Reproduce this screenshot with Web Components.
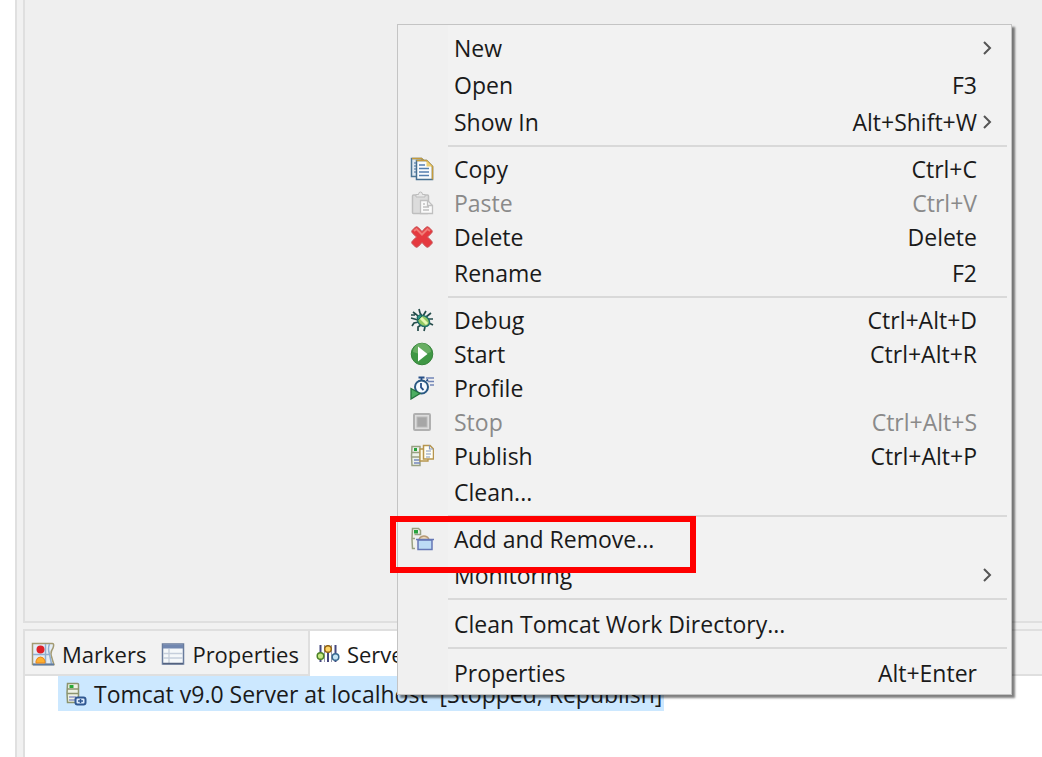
<!DOCTYPE html>
<html lang="en">
<head>
<meta charset="UTF-8">
<meta name="viewport" content="width=device-width, initial-scale=1.0">
<title>Servers</title>
<style>
  body {
    margin: 0;
    background: #fff;
    color: #1a1a1a;
    font: 23px/34px "Open Sans", "Noto Sans", "Noto Sans CJK KR", sans-serif;
    overflow: hidden;
  }
</style>
</head>
<body>
<work-bench>
  <view-stack slot="views">
    <view-tab slot="tabs" icon="markers">Markers</view-tab>
    <view-tab slot="tabs" icon="properties">Properties</view-tab>
    <view-tab slot="tabs" icon="servers" active>Servers</view-tab>
    <server-row>Tomcat v9.0 Server at localhost  [Stopped, Republish]</server-row>
  </view-stack>
</work-bench>

<context-menu>
  <menu-item submenu>New</menu-item>
  <menu-item keys="F3">Open</menu-item>
  <menu-item keys="Alt+Shift+W" submenu>Show In</menu-item>
  <menu-line></menu-line>
  <menu-item icon="copy" keys="Ctrl+C">Copy</menu-item>
  <menu-item icon="paste" keys="Ctrl+V" disabled>Paste</menu-item>
  <menu-item icon="delete" keys="Delete">Delete</menu-item>
  <menu-item keys="F2">Rename</menu-item>
  <menu-line></menu-line>
  <menu-item icon="debug" keys="Ctrl+Alt+D">Debug</menu-item>
  <menu-item icon="start" keys="Ctrl+Alt+R">Start</menu-item>
  <menu-item icon="profile">Profile</menu-item>
  <menu-item icon="stop" keys="Ctrl+Alt+S" disabled>Stop</menu-item>
  <menu-item icon="publish" keys="Ctrl+Alt+P">Publish</menu-item>
  <menu-item>Clean...</menu-item>
  <menu-line></menu-line>
  <menu-item icon="addremove" marked>Add and Remove...</menu-item>
  <menu-item submenu>Monitoring</menu-item>
  <menu-line></menu-line>
  <menu-item>Clean Tomcat Work Directory...</menu-item>
  <menu-line></menu-line>
  <menu-item keys="Alt+Enter">Properties</menu-item>
</context-menu>

<script>
const icons = {
  markers: `
    <path d="M1.500 1.500h20q2 0 .500 4.500q-3 4.500-1.500 8.500q1 4 2.500 8h-21.500z" fill="#e4edf6" stroke="#a39a72" stroke-width="1.500"/>
    <path d="M14.500 2v20M18.500 2q-2 5 0 10q1 5 2 10M2 12.500h17" fill="none" stroke="#91afd0" stroke-width="1.500"/>
    <path d="M2 22.500h21" stroke="#607b9f" stroke-width="2"/>
    <circle cx="9.500" cy="7.500" r="4" fill="#df2028"/>
    <path d="M5 21v-2q1-4 4.500-4t4.500 4v2z" fill="#ffb02e" stroke="#e7871e"/>`,
  properties: `
    <rect x="1.500" y="2" width="21" height="20" fill="#f5f8fa" stroke="#687b9c" stroke-width="1.500"/>
    <path d="M2 2.500h20v4h-20z" fill="#7187b0"/>
    <path d="M8 7v14M2 11.500h20M2 16h20" stroke="#c5cedb" stroke-width="1.300"/>
    <path d="M2 21.500h20" stroke="#53627f" stroke-width="1.500"/>`,
  servers: `
    <path d="M4.500 3v17M12 3v17M19.500 3v17" stroke="#45487e" stroke-width="2"/>
    <path d="M8.500 3v17M15.500 3v17" stroke="#9698ad" stroke-width="1"/>
    <circle cx="4.500" cy="14" r="3.300" fill="#c6e883" stroke="#4c8126" stroke-width="1.500"/>
    <circle cx="12" cy="7" r="3.300" fill="#ffd568" stroke="#936414" stroke-width="1.500"/>
    <circle cx="19.500" cy="15" r="3.300" fill="#c5e5f4" stroke="#37688f" stroke-width="1.500"/>`,
  copy: `
    <path d="M1.500 1.500h10l3 3v15h-13z" fill="#e0eaf2" stroke="#4e7796" stroke-width="1.500"/>
    <path d="M2 1.500h9.500l3 3" fill="none" stroke="#c69b3b" stroke-width="1.500"/>
    <path d="M4 6h3M4 9h3M4 12h3M4 15h3" stroke="#7797b9" stroke-width="1.500"/>
    <path d="M6.500 3.500h10l6 6v13h-16z" fill="#f8fbfd" stroke="#456f91" stroke-width="1.500"/>
    <path d="M6.500 3.500h10l6 6v13" fill="none" stroke="#c69b3b" stroke-width="1.500"/>
    <path d="M16.500 3.500v6h6z" fill="#edcf72"/>
    <path d="M9 8h6M9 11.500h10M9 15h10M9 18.500h10" stroke="#547fae" stroke-width="1.500"/>`,
  paste: `
    <rect x="2.500" y="4" width="16" height="18.500" rx="1" fill="#dcdcdc" stroke="#bebebe" stroke-width="1.500"/>
    <path d="M6 6V3.500h2.500q0-2.500 2-2.500t2 2.500H15V6z" fill="#e8e8e8" stroke="#bdbdbd"/>
    <path d="M10.500 9.500h7l5 5v8h-12z" fill="#fafafa" stroke="#c0c0c0" stroke-width="1.300"/>
    <path d="M17.500 9.500v5h5M13 13h2M13 16h6M13 19h6" fill="none" stroke="#c0c0c0" stroke-width="1.300"/>`,
  delete: `
    <path d="M2 5.500 5.500 2q1.500-.800 3 .700l3.500 3.800 3.500-3.800q1.500-1.500 3-.700L22 5.500q.700 1.200-.300 2.500L17.500 12l4.200 4q1 1.300.300 2.500L18.500 22q-1.500.800-3-.700L12 17.500l-3.500 3.800q-1.500 1.500-3 .700L2 18.500q-.700-1.200.300-2.500l4.200-4-4.200-4q-1-1.300-.300-2.500z" fill="#e5393f" stroke="#c9565a"/>
    <path d="m4 6 2.500-2 5.500 5.500L17.500 4 20 6" fill="none" stroke="#f17c76" stroke-width="2"/>`,
  debug: `
    <path d="m1 10 7 2M3 4l4 3 2 3M9 1l1 4 2 3M16 3l-3 5M21 5l-5 4M18 11h5M19 15l4 2M9 14l-5 1-2 3M11 17l-3 2v4M15 19l-1 4M5 7H1" fill="none" stroke="#244c4b" stroke-width="1.700"/>
    <ellipse cx="13.500" cy="13" rx="6.500" ry="5" transform="rotate(35 13.500 13)" fill="#92c964" stroke="#21716a" stroke-width="1.500"/>
    <path d="m11 10 6 6" stroke="#e7f7b2" stroke-width="3"/>
    <path d="M7 9q3-4 5-1l-4 4z" fill="#2c9684" stroke="#1e645f"/>`,
  start: `
    <circle cx="12" cy="12" r="10.800" fill="#3f9744" stroke="#36843b"/>
    <path d="M3 10a9 9 0 0 1 18 0q-8 4-18 0z" fill="#8bc17d" opacity=".55"/>
    <path d="m8 4.500 9.500 7.500L8 19.500z" fill="#fff"/>`,
  profile: `
    <circle cx="11.500" cy="11" r="6.500" fill="#f5faff" stroke="#295883" stroke-width="2"/>
    <path d="M11.500 4V1.500M8.500 1.500h6M16.500 5l1.500-1.500M11 7v4.500l2.500 2.500" fill="none" stroke="#274f87" stroke-width="1.800"/>
    <path d="M16 2h8M18 5.500h6M20 9h4" stroke="#7185b6" stroke-width="1.500"/>
    <path d="m1 12.500 9 5-9 5.500z" fill="#4cae61" stroke="#24723d" stroke-width="1.300"/>`,
  stop: `
    <rect x="4" y="4" width="16" height="16" rx="1" fill="#dcdcdc" stroke="#b0b0b0" stroke-width="2"/>
    <rect x="7" y="7" width="10" height="10" fill="#a6a6a6" stroke="#b9b9b9"/>`,
  publish: `
    <path d="M2 2.500h8v19H2q-1-9 0-19z" fill="#edf2eb" stroke="#99a083" stroke-width="1.500"/>
    <path d="M2 8.500h8M2 13h8" stroke="#99a083" stroke-width="1.300"/>
    <path d="M4 4h3v3H4z" fill="#27a33d"/>
    <path d="M4 16h6M4 19h6" stroke="#7588bd" stroke-width="1.500"/>
    <path d="M10 5h8v12h-8z" fill="#fffbe8" stroke="#b7954c" stroke-width="1.300"/>
    <path d="M13.500 1.500H20l3.500 3.500v10h-10z" fill="#fffef4" stroke="#b7954c" stroke-width="1.500"/>
    <path d="M19.500 1.500V5H23M16 7h5M16 10h5M16 13h4" fill="none" stroke="#8395bb" stroke-width="1.200"/>`,
  addremove: `
    <path d="M5 21.500H2.500q-1-9.500 0-20h6l2 2v4h-6" fill="#f0f3e8" stroke="#99a083" stroke-width="1.500"/>
    <path d="M2 11.500h3" stroke="#99a083" stroke-width="1.500"/>
    <path d="M4 3h4v3.500H4z" fill="#27a33d"/>
    <path d="M9 12q2-3 5-3t5 3" fill="#edd9bb" stroke="#b79a75" stroke-width="1.300"/>
    <path d="M8 13h14v9.500H8z" fill="#bcdbf5" stroke="#6577b5" stroke-width="1.500"/>
    <path d="M6 12.500h18" stroke="#6577b5" stroke-width="1.500"/>`,
  tomcat: `
    <path d="M3.500 1.500h10q1 0 1 1v18h-11q-1-9 0-19z" fill="#edf1e5" stroke="#8c946f" stroke-width="1.500"/>
    <path d="M3 7h11M3 11.500h11" stroke="#8c946f" stroke-width="1.500"/>
    <path d="M5.500 3h4v3h-4z" fill="#28a936"/>
    <path d="M5 15h7M5 18h6" stroke="#a5adcd" stroke-width="2"/>
    <rect x="11.500" y="15.500" width="10" height="7" rx="2" fill="#dcecff" stroke="#305892" stroke-width="2"/>
    <path d="M14 19h5M16.500 17v4" stroke="#305892" stroke-width="1.500"/>`
};

function icon(name) {
  return `<svg width="24" height="24" viewBox="0 0 24 24" aria-hidden="true">${icons[name] || ''}</svg>`;
}

class WorkBench extends HTMLElement {
  connectedCallback() {
    this.attachShadow({ mode: 'open' });
    this.shadowRoot.innerHTML = `
      <style>
        :host {
          box-sizing: border-box;
          display: flex;
          flex-direction: column;
          gap: 6px;
          min-height: 100vh;
          margin-left: 15px;
          padding-left: 6px;
          border-left: 2px solid #e0e0e0;
          background: #f1f1f1;
        }
        .editor {
          flex: 1;
          border: solid #dfdfdf;
          border-width: 0 0 2px 2px;
          background: #efefef;
        }
      </style>
      <main class="editor"></main>
      <slot name="views"></slot>
    `;
  }
}

class ViewStack extends HTMLElement {
  connectedCallback() {
    this.attachShadow({ mode: 'open' });
    this.shadowRoot.innerHTML = `
      <style>
        :host {
          display: block;
          border: solid #dfdfdf;
          border-width: 2px 0 0 2px;
          background: #fff;
        }
        .tabs {
          display: flex;
          background: #f2f2f2;
          box-shadow: inset 0 -2px #dfdfdf;
          font-size: 22px;
        }
        .content {
          padding: 0 0 46px 33px;
        }
      </style>
      <div class="tabs" role="tablist"><slot name="tabs"></slot></div>
      <div class="content"><slot></slot></div>
    `;
  }
}

class ViewTab extends HTMLElement {
  connectedCallback() {
    this.attachShadow({ mode: 'open' });
    this.shadowRoot.innerHTML = `
      <style>
        :host { display: block; }
        button {
          display: flex;
          align-items: center;
          gap: 7px;
          height: 45px;
          padding: 0 9px 0 6px;
          border: 0;
          background: none;
          color: inherit;
          font: inherit;
        }
        :host([active]) button {
          border-left: 2px solid #dfdfdf;
          background: #fff;
        }
      </style>
      <button type="button" role="tab" aria-selected="${this.hasAttribute('active')}">
        ${icon(this.getAttribute('icon'))}
        <slot></slot>
      </button>
    `;
  }
}

class ServerRow extends HTMLElement {
  connectedCallback() {
    this.attachShadow({ mode: 'open' });
    this.shadowRoot.innerHTML = `
      <style>
        :host {
          display: inline-flex;
          align-items: center;
          gap: 6px;
          height: 35px;
          padding: 0 2px 0 6px;
          background: #cce8ff;
          white-space: pre;
          vertical-align: top;
        }
      </style>
      ${icon('tomcat')}<span><slot></slot></span>
    `;
  }
}

class ContextMenu extends HTMLElement {
  connectedCallback() {
    this.attachShadow({ mode: 'open' });
    this.shadowRoot.innerHTML = `
      <style>
        :host {
          position: absolute;
          top: 24px;
          left: 397px;
          box-sizing: border-box;
          width: 615px;
          padding: 4px 4px 3px 0;
          border: 1px solid #c4c4c4;
          background: linear-gradient(to right, #f0f0f0 50px, #f2f2f2 50px);
          box-shadow: 3px 3px 2px rgba(0, 0, 0, 0.5);
        }
      </style>
      <div role="menu"><slot></slot></div>
    `;
  }
}

class MenuItem extends HTMLElement {
  connectedCallback() {
    const keys = this.getAttribute('keys') || '';
    const arrow = this.hasAttribute('submenu')
      ? '<svg class="arrow" width="12" height="16" viewBox="0 0 12 16"><path d="m1 2 6 6-6 6" fill="none" stroke="#555" stroke-width="2"/></svg>'
      : '';
    this.attachShadow({ mode: 'open' });
    this.shadowRoot.innerHTML = `
      <style>
        :host {
          display: block;
          position: relative;
        }
        button {
          display: grid;
          grid-template-columns: 24px 1fr auto 12px;
          align-items: center;
          width: 100%;
          height: 37px;
          padding: 0 12px;
          border: 0;
          background: none;
          color: inherit;
          font: inherit;
          text-align: left;
        }
        :host([icon]) button { height: 34px; }
        button:disabled { color: #8a8a8a; }
        .label { padding-left: 20px; }
        .keys { padding-right: 6px; }
        /* red callout drawn round the highlighted command */
        :host([marked]) { z-index: 1; }
        :host([marked])::after {
          content: "";
          position: absolute;
          inset: -6px auto auto -8px;
          box-sizing: border-box;
          width: 306px;
          height: 57px;
          border: 6px solid #ff0000;
        }
      </style>
      <button type="button" role="menuitem" ${this.hasAttribute('disabled') ? 'disabled' : ''}>
        ${icon(this.getAttribute('icon'))}
        <span class="label"><slot></slot></span>
        <span class="keys">${keys}</span>
        ${arrow}
      </button>
    `;
  }
}

class MenuLine extends HTMLElement {
  connectedCallback() {
    this.attachShadow({ mode: 'open' });
    this.shadowRoot.innerHTML = `
      <style>
        :host { display: block; padding: 5px 0 5px 50px; }
        hr { height: 2px; margin: 0; border: 0; background: #d9d9d9; }
      </style>
      <hr>
    `;
  }
}

customElements.define('work-bench', WorkBench);
customElements.define('view-stack', ViewStack);
customElements.define('view-tab', ViewTab);
customElements.define('server-row', ServerRow);
customElements.define('context-menu', ContextMenu);
customElements.define('menu-item', MenuItem);
customElements.define('menu-line', MenuLine);
</script>
</body>
</html>
